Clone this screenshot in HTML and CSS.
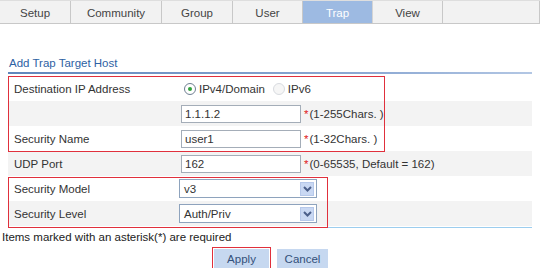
FILE: index.html
```html
<!DOCTYPE html>
<html lang="en">
<head>
  <meta charset="utf-8">
  <title>Trap</title>
  <link rel="stylesheet" href="styles.css">
</head>
<body>
  <div class="tabs">
    <div class="tab tab-setup">Setup</div>
    <div class="tab tab-community">Community</div>
    <div class="tab tab-group">Group</div>
    <div class="tab tab-user">User</div>
    <div class="tab tab-trap active">Trap</div>
    <div class="tab tab-view">View</div>
    <div class="tab tab-rest"></div>
  </div>

  <div class="panel">
    <div class="title">Add Trap Target Host</div>
    <div class="form">
      <div class="row">
        <div class="label">Destination IP Address</div>
        <div class="value">
          <span class="radio radio-on"></span><span class="radio-text">IPv4/Domain</span>
          <span class="radio radio-off"></span><span class="radio-text">IPv6</span>
        </div>
      </div>
      <div class="row">
        <div class="label"></div>
        <div class="value">
          <span class="input">1.1.1.2</span><span class="req">*</span><span class="hint">(1-255Chars. )</span>
        </div>
      </div>
      <div class="row">
        <div class="label">Security Name</div>
        <div class="value">
          <span class="input">user1</span><span class="req">*</span><span class="hint">(1-32Chars. )</span>
        </div>
      </div>
      <div class="row">
        <div class="label">UDP Port</div>
        <div class="value">
          <span class="input">162</span><span class="req">*</span><span class="hint">(0-65535, Default = 162)</span>
        </div>
      </div>
      <div class="row">
        <div class="label">Security Model</div>
        <div class="value">
          <span class="select">v3<span class="select-btn"><svg width="9" height="6" viewBox="0 0 9 6"><path d="M1 1 L4.5 4.5 L8 1" fill="none" stroke="#4b5f8a" stroke-width="2"/></svg></span></span>
        </div>
      </div>
      <div class="row">
        <div class="label">Security Level</div>
        <div class="value">
          <span class="select">Auth/Priv<span class="select-btn"><svg width="9" height="6" viewBox="0 0 9 6"><path d="M1 1 L4.5 4.5 L8 1" fill="none" stroke="#4b5f8a" stroke-width="2"/></svg></span></span>
        </div>
      </div>

      <div class="mark mark-dest"></div>
      <div class="mark mark-sec"></div>
    </div>
  </div>

  <div class="note">Items marked with an asterisk(*) are required</div>

  <div class="actions">
    <button class="btn btn-apply">Apply</button>
    <button class="btn btn-cancel">Cancel</button>
  </div>
</body>
</html>
```

FILE: styles.css
```css
* {
  box-sizing: border-box;
}

html, body {
  margin: 0;
}

body {
  width: 540px;
  height: 268px;
  overflow: hidden;
  background: #fff;
  color: #333;
  font-family: "Liberation Sans", Arial, sans-serif;
  font-size: 11.5px;
}

/* tab bar */
.tabs {
  display: flex;
  height: 24px;
  background: #f2f2f2;
  border-top: 1px solid #dedede;
  border-bottom: 1px solid #c8c8c8;
}

.tab {
  display: flex;
  align-items: center;
  justify-content: center;
  padding-top: 2px;
  border-right: 1px solid #c8c8c8;
  color: #444;
}

.tab-setup { width: 71px; }
.tab-community { width: 91px; }
.tab-group { width: 71px; }
.tab-user { width: 70px; }
.tab-trap { width: 70px; }
.tab-view { width: 70px; }
.tab-rest { flex: 1; }

.tab.active {
  background: #9dbae2;
  color: #fff;
  border-right-color: #d4d4d4;
}

/* panel */
.panel {
  margin: 0 8px;
}

.title {
  position: relative;
  margin-top: 32px;
  height: 18px;
  line-height: 15px;
  padding-left: 1px;
  color: #2e61a3;
}

.title::after {
  content: "";
  position: absolute;
  left: 0;
  right: 0;
  bottom: 0;
  height: 2px;
  background: linear-gradient(to right, #5f86bb, #8eaad4 70%, #b3c7e4);
}

.form {
  position: relative;
  margin-top: 2px;
  padding-bottom: 1px;
  border-bottom: 1px solid #9ccdee;
}

.row {
  display: flex;
  align-items: center;
  height: 25px;
}

.row:nth-child(even) {
  background: #f3f3f3;
}

.label {
  width: 170px;
  padding-left: 6px;
}

.value {
  display: flex;
  align-items: center;
}

/* radios */
.radio {
  position: relative;
  width: 12px;
  height: 12px;
  border-radius: 50%;
  background: #fff;
}

.radio-on {
  margin-left: 6px;
  border: 1px solid #6f7f92;
}

.radio-on::after {
  content: "";
  position: absolute;
  left: 3px;
  top: 3px;
  width: 4px;
  height: 4px;
  border-radius: 50%;
  background: #31a23c;
}

.radio-off {
  margin-left: 8px;
  border: 1px solid #d8dbe0;
  background: #f6f6f6;
}

.radio-text {
  margin-left: 3px;
}

/* inputs */
.input {
  display: flex;
  align-items: center;
  width: 120px;
  height: 18px;
  margin-left: 3px;
  padding-left: 3px;
  border: 1px solid #a4adb8;
  background: #fff;
}

.req {
  margin-left: 3px;
  color: #e02020;
}

.hint {
  margin-left: 1px;
}

/* selects */
.select {
  display: flex;
  align-items: center;
  justify-content: space-between;
  width: 138px;
  height: 19px;
  margin-left: 1px;
  padding-left: 4px;
  padding-right: 2px;
  border: 1px solid #8ea3bd;
  background: #fff;
}

.select-btn {
  display: flex;
  align-items: center;
  justify-content: center;
  width: 14px;
  height: 14px;
  background: #c9d8f3;
  border: 1px solid #b6c8ea;
}

/* annotation boxes */
.mark {
  position: absolute;
  left: 0;
  border: 1px solid #e0303c;
  pointer-events: none;
}

.mark-dest {
  top: 0;
  width: 377px;
  height: 76px;
}

.mark-sec {
  top: 101px;
  width: 320px;
  height: 51px;
}

.note {
  padding-left: 2px;
  height: 18px;
  line-height: 18px;
  color: #222;
}

/* buttons */
.actions {
  display: flex;
  justify-content: center;
  gap: 8px;
  margin-top: 3px;
  padding-left: 2px;
}

.btn {
  height: 20px;
  padding: 0;
  border: none;
  background: #c6d8f0;
  color: #33507a;
  font-family: "Liberation Sans", Arial, sans-serif;
  font-size: 11.5px;
}

.btn-apply {
  width: 55px;
  outline: 1px solid #e0303c;
  outline-offset: 1px;
}

.btn-cancel {
  width: 51px;
}
```
